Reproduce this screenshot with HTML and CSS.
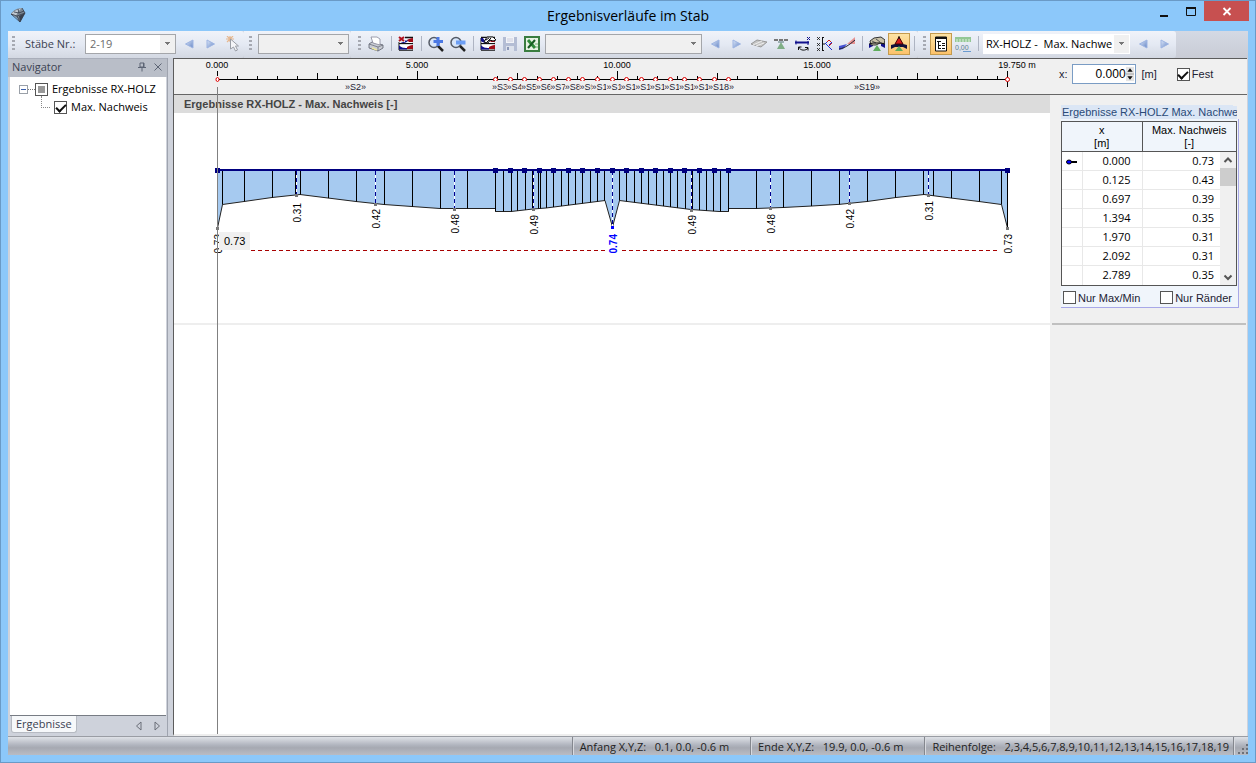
FILE: index.html
```html
<!DOCTYPE html>
<html lang="de">
<head>
<meta charset="utf-8">
<title>Ergebnisverläufe im Stab</title>
<link rel="stylesheet" href="styles.css">
</head>
<body>
<svg class="defs" aria-hidden="true">
  <defs>
    <linearGradient id="tri" x1="0" y1="0" x2="1" y2="1"><stop offset="0" stop-color="#dfeafa"/><stop offset="1" stop-color="#6484c4"/></linearGradient>
    <symbol id="i-prev" viewBox="0 0 16 16"><path d="M12 4v8L4.500 8z" fill="url(#tri)" stroke="#9db4e2"/></symbol>
    <symbol id="i-next" viewBox="0 0 16 16"><path d="M4 4v8l7.500-4z" fill="url(#tri)" stroke="#9db4e2"/></symbol>
    <symbol id="i-flag" viewBox="0 0 16 16">
      <path d="M1 1.500h14M1 7.500h14M1 14h14" stroke="#111" stroke-width="1.500"/>
      <path d="M1 2v12" stroke="#111"/>
      <path d="M1.500 2h4c2 3 5 1 9 0v5h-13z" fill="#fff"/>
      <path d="M1 2h2c1 3 5 3 7 2v1c-3 3-7 2-9 0z" fill="#10108c"/><path d="M9 4c2-1 3-2 6-2v4h-4z" fill="#a00c18"/>
      <path d="M1.500 8.500h13v5h-13z" fill="#fff"/>
      <path d="M1 9c2 3 6 3 8 3v1.500H1z" fill="#10108c"/><path d="M9 11c2-1 3-2 6-2v4H9z" fill="#a00c18"/>
    </symbol>
    <symbol id="i-support" viewBox="0 0 16 16"><path d="M1 4h14" stroke="#777" stroke-width="2" stroke-dasharray="4 1"/><path d="M8 6l4 7H4z" fill="#7fae86"/><path d="M5 6h6" stroke="#577" /></symbol>
  </defs>
</svg>

<header class="titlebar">
  <svg class="app-icon" viewBox="0 0 16 16"><path d="M1 7C3 3 8 1 12 1l3 5-5 9-3-4z" fill="#7c8894"/><path d="M1 7C4 4 8 2 12 1c-3 2-5 5-6 8z" fill="#c0c8d0"/><path d="M9 9l6-3-5 9z" fill="#38404e"/><path d="M1 7l6 2 8-3M7 9l3 6 5-9-3-5M1 7l9 8M4 5l5 1 5-2M8 2l1 4" stroke="#333a48" stroke-width=".8" fill="none"/></svg>
  <h1>Ergebnisverläufe im Stab</h1>
  <div class="window-buttons">
    <button class="win" aria-label="Minimieren"><svg viewBox="0 0 12 12"><path d="M2 11h8" stroke="#111" stroke-width="2"/></svg></button>
    <button class="win" aria-label="Maximieren"><svg viewBox="0 0 12 12"><path d="M1.500 3v7.500h9V3" fill="none" stroke="#111"/><path d="M1 3h10" stroke="#111" stroke-width="2"/></svg></button>
    <button class="win close" aria-label="Schließen"><svg viewBox="0 0 12 12"><path d="M2.500 3l7 7M9.500 3l-7 7" stroke="#fff" stroke-width="1.800"/></svg></button>
  </div>
</header>

<div class="frame">
  <div class="toolbar" role="toolbar">
    <div class="group">
      <span class="grip"></span>
      <label for="bars">Stäbe Nr.:</label>
      <select id="bars" class="combo w-bars"><option>2-19</option></select>
      <button class="tool" aria-label="Vorheriger Stab"><svg><use href="#i-prev"/></svg></button>
      <button class="tool" aria-label="Nächster Stab"><svg><use href="#i-next"/></svg></button>
      <button class="tool" aria-label="Stab wählen"><svg viewBox="0 0 16 16"><path d="M1 3h8M5 0v6M2 0l6 6M8 0L2 6" stroke="#e6b890" stroke-width="1.200"/><path d="M5.500 3v10l3-2 2 4 2-1-2-4h3z" fill="#f4f5f8" stroke="#9a9ea6"/></svg></button>
    </div>
    <div class="group">
      <span class="grip"></span>
      <select class="combo w-bars empty" aria-label="Lastfall"><option></option></select>
    </div>
    <div class="group">
      <span class="grip"></span>
      <button class="tool" aria-label="Drucken"><svg viewBox="0 0 16 16"><path d="M1 8l3-2 11 3v3l-5 3-9-3z" fill="#c9ccd4" stroke="#5c606c" stroke-width=".8"/><path d="M3 1l6 0 3 2 0 6-7-2z" fill="#fff" stroke="#889" stroke-width=".8"/><path d="M1 8l9 3 5-2M10 11v4" stroke="#6c707c" stroke-width=".8" fill="none"/><path d="M4 12l5 2" stroke="#eee8a0" stroke-width="1.500"/></svg></button>
      <span class="sep"></span>
      <button class="tool" aria-label="Verläufe löschen"><svg viewBox="0 0 16 16"><use href="#i-flag"/><path d="M0 0h7v6H0z" fill="#e8edf6"/><path d="M1 1l5 4M6 1L1 5" stroke="#b0101c" stroke-width="2"/></svg></button>
      <span class="sep"></span>
      <button class="tool" aria-label="Vergrößern"><svg viewBox="0 0 16 16"><circle cx="6" cy="6.500" r="5" fill="#d8e6fa" stroke="#555b66" stroke-width="1.500"/><path d="M10 10l5 5" stroke="#222" stroke-width="2.500"/><path d="M10 1v9M5.500 5.500H15" stroke="#4a78e4" stroke-width="3"/></svg></button>
      <button class="tool" aria-label="Verkleinern"><svg viewBox="0 0 16 16"><circle cx="6" cy="6.500" r="5" fill="#d8e6fa" stroke="#555b66" stroke-width="1.500"/><path d="M10 10l5 5" stroke="#222" stroke-width="2.500"/><path d="M6 6.500h9.500" stroke="#6c9ef4" stroke-width="4"/></svg></button>
      <span class="sep"></span>
      <button class="tool" aria-label="Verläufe"><svg viewBox="0 0 16 16"><use href="#i-flag"/><path d="M4 6l3-5h6l3 3-3 1-3-1-2 3z" fill="#fff" stroke="#111"/><path d="M6 4l3-2M7 6l4-4" stroke="#111"/></svg></button>
      <button class="tool" aria-label="Speichern"><svg viewBox="0 0 16 16"><path d="M1 1h14v14H1z" fill="#b4bdd4"/><path d="M4 1h8v6H4z" fill="#f2f4f8"/><path d="M5 3h6M5 5h6" stroke="#ccd"/><path d="M4 10h8v5H4z" fill="#dde2ec"/><path d="M5 11h2v3H5z" fill="#8c98b8"/></svg></button>
      <button class="tool" aria-label="Excel-Export"><svg viewBox="0 0 16 16"><path d="M1 1h14v14H1z" fill="#e8f3e4" stroke="#3a7d40" stroke-width="2"/><path d="M4 4l7 8" stroke="#2f8a3a" stroke-width="3"/><path d="M11 4l-7 8" stroke="#175c22" stroke-width="2"/><path d="M11 8h3M11 11h3" stroke="#7ab47c"/></svg></button>
      <select class="combo w-wide empty" aria-label="Verlauf"><option></option></select>
      <button class="tool" aria-label="Zurück"><svg><use href="#i-prev"/></svg></button>
      <button class="tool" aria-label="Weiter"><svg><use href="#i-next"/></svg></button>
      <button class="tool" aria-label="Fläche"><svg viewBox="0 0 16 16"><path d="M0 8l6-4 10 2-6 5z" fill="#c4c4c4" stroke="#999"/><path d="M2 9l9-4M5 10l8-3" stroke="#eee"/></svg></button>
      <button class="tool" aria-label="Lager"><svg><use href="#i-support"/></svg></button>
      <button class="tool" aria-label="Achse drehen"><svg viewBox="0 0 16 16"><path d="M0 6.500h14" stroke="#10108c" stroke-width="2"/><path d="M1 4.500v4M13 5v4" stroke="#10108c"/><path d="M12 1l3 3M15 1l-3 3" stroke="#10108c"/><path d="M4 11c1 4 7 4 9 1M3.500 14v-3h3M13 14.500v-3h-3" stroke="#111" fill="none"/></svg></button>
      <button class="tool" aria-label="Knoten"><svg viewBox="0 0 16 16"><path d="M0 1l3 3M3 1L0 4M0 7l3 3M3 7l-3 3M0 12l3 3M3 12l-3 3" stroke="#111" stroke-width=".8"/><path d="M5.500 1v14M5 1.500h2M5 8h3M5 14.500h2" stroke="#111"/><path d="M8 8l4-4 3 3-3 3" stroke="#d02020" fill="none"/><path d="M8 8l2-2M9 8l6 6M12 9l3-3" stroke="#2030d0" fill="none"/></svg></button>
      <button class="tool" aria-label="Glätten"><svg viewBox="0 0 16 16"><path d="M8 8l8-7v7z" fill="#e89494"/><path d="M0 10l8-2-4 5-4 1z" fill="#4450d4"/><path d="M0 13c6-1 10-4 16-9" stroke="#223" fill="none"/></svg></button>
      <span class="sep"></span>
      <button class="tool" aria-label="Durchlauf"><svg viewBox="0 0 16 16"><path d="M0 12V8h4v2zM16 12V8h-4v2z" fill="#10108c"/><path d="M1 5l4-3 7-1 4 3-1 4-4-1-4 2-5 0z" fill="#c9c2a8" stroke="#333"/><path d="M3 5l4 2M7 3l4 3" stroke="#555"/><path d="M0 8l4-1h8l4 1" stroke="#111" fill="none"/><path d="M8 9l4 6H4z" fill="#5fae5c"/></svg></button>
      <button class="tool active" aria-label="Extremwerte"><svg viewBox="0 0 16 16"><path d="M0 13V9l4-1h8l4 1v4l-4-2H4z" fill="#10103c"/><path d="M8 1l4 7H4z" fill="#d81c1c" stroke="#400"/><path d="M8 0v3" stroke="#111"/><path d="M8 10l4 5H4z" fill="#5fae5c"/></svg></button>
      <span class="sep"></span>
    </div>
    <div class="group">
      <span class="grip"></span>
      <button class="tool active" aria-label="Navigator"><svg viewBox="0 0 16 16"><path d="M2.500 1h11v14h-11z" fill="#fff" stroke="#111"/><path d="M2 2h12" stroke="#111" stroke-width="2"/><path d="M5.500 5v8M4 5.500h4M5 9.500h3M5 12.500h3M9 7.500h3M9 9.500h3M9 12.500h3" stroke="#111"/></svg></button>
      <button class="tool" aria-label="Zahlenwerte"><svg viewBox="0 0 16 16"><path d="M0 1h16v5H0z" fill="#93c795"/><path d="M2 3v3M5 3v3M8 3v3M11 3v3M14 3v3" stroke="#dff0df"/><text x="0" y="14" class="icon-text">0,00</text><path d="M8 15.500h8" stroke="#6a9bd0"/></svg></button>
      <span class="sep"></span>
      <select class="combo w-result" aria-label="Ergebnis"><option>RX-HOLZ -&nbsp; Max. Nachwe</option></select>
      <button class="tool" aria-label="Vorheriges Ergebnis"><svg><use href="#i-prev"/></svg></button>
      <button class="tool" aria-label="Nächstes Ergebnis"><svg><use href="#i-next"/></svg></button>
    </div>
  </div>

  <main class="workspace">
    <aside class="navigator">
      <div class="nav-head">
        <h2>Navigator</h2>
        <button class="mini" aria-label="Anheften"><svg viewBox="0 0 10 10"><path d="M3 1h4v4H3zM1 5.500h8M5 6v3.500M6.500 1v4" fill="none" stroke="#5c6474"/></svg></button>
        <button class="mini" aria-label="Navigator schließen"><svg viewBox="0 0 10 10"><path d="M1.500 1.500l7 7M8.500 1.500l-7 7" stroke="#5c6474"/></svg></button>
      </div>
      <div class="tree">
        <div class="node">
          <button class="expander" aria-label="Zuklappen"></button><span class="dots"></span>
          <input type="checkbox" id="n1" class="check partial"><label for="n1">Ergebnisse RX-HOLZ</label>
        </div>
        <div class="node child">
          <span class="elbow"></span>
          <input type="checkbox" id="n2" class="check" checked><label for="n2">Max. Nachweis</label>
        </div>
      </div>
      <div class="nav-tabs">
        <button class="tab">Ergebnisse</button>
        <button class="mini" aria-label="Tab zurück"><svg viewBox="0 0 10 10"><path d="M7 1v8L2.500 5z" fill="none" stroke="#6a6e78"/></svg></button>
        <button class="mini" aria-label="Tab weiter"><svg viewBox="0 0 10 10"><path d="M3 1v8L7.500 5z" fill="none" stroke="#6a6e78"/></svg></button>
      </div>
    </aside>

    <section class="content">
      <div class="plot">
        <svg id="ruler" class="ruler" viewBox="174 59 876 35"></svg>
        <h2 class="plot-title">Ergebnisse RX-HOLZ - Max. Nachweis [-]</h2>
        <svg id="chart" class="chart" viewBox="174 113 876 210"></svg>
        <span class="cursor"></span>
        <output class="tip">0.73</output>
      </div>
      <aside class="side">
        <div class="position">
          <label for="xpos">x:</label>
          <span class="spin">
            <input id="xpos" type="text" value="0.000">
            <svg viewBox="0 0 9 16"><path d="M0 0h9v16H0z" fill="#e4e4e4"/><path d="M0 8h9" stroke="#999"/><path d="M1.500 5.500h6l-3-4zM1.500 10.500h6l-3 4z" fill="#111"/></svg>
          </span>
          <span>[m]</span>
          <input type="checkbox" id="fest" class="check" checked><label for="fest">Fest</label>
        </div>
        <div class="results">
          <h2>Ergebnisse RX-HOLZ Max. Nachwe</h2>
          <div class="results-body">
            <div class="table-box">
              <table>
                <colgroup><col class="c-mark"><col class="c-x"><col></colgroup>
                <thead><tr><th colspan="2">x<br>[m]</th><th>Max. Nachweis<br>[-]</th></tr></thead>
                <tbody>
                  <tr><td><svg class="marker" viewBox="0 0 11 6"><path d="M3 3h8" stroke="#000" stroke-width="2"/><ellipse cx="3" cy="3" rx="2.500" ry="2" fill="#00f" stroke="#000"/></svg></td><td>0.000</td><td>0.73</td></tr>
                  <tr><td></td><td>0.125</td><td>0.43</td></tr>
                  <tr><td></td><td>0.697</td><td>0.39</td></tr>
                  <tr><td></td><td>1.394</td><td>0.35</td></tr>
                  <tr><td></td><td>1.970</td><td>0.31</td></tr>
                  <tr><td></td><td>2.092</td><td>0.31</td></tr>
                  <tr><td></td><td>2.789</td><td>0.35</td></tr>
                </tbody>
              </table>
              <div class="scroll">
                <svg viewBox="0 0 16 16"><path d="M4.500 10L8 6.500l3.500 3.500" fill="none" stroke="#555" stroke-width="2"/></svg>
                <span class="thumb"></span>
                <svg viewBox="0 0 16 16"><path d="M4.500 6.500L8 10l3.500-3.500" fill="none" stroke="#555" stroke-width="2"/></svg>
              </div>
            </div>
            <div class="filters">
              <span><input type="checkbox" id="mm" class="check"><label for="mm">Nur Max/Min</label></span>
              <span><input type="checkbox" id="rd" class="check"><label for="rd">Nur Ränder</label></span>
            </div>
          </div>
        </div>
      </aside>
    </section>
  </main>

  <footer class="status">
    <span class="cell">Anfang X,Y,Z:&nbsp;&nbsp; 0.1, 0.0, -0.6 m</span>
    <span class="cell">Ende X,Y,Z:&nbsp;&nbsp; 19.9, 0.0, -0.6 m</span>
    <span class="cell">Reihenfolge:&nbsp;&nbsp; 2,3,4,5,6,7,8,9,10,11,12,13,14,15,16,17,18,19</span>
    <span class="cell"><svg class="size-grip" viewBox="0 0 10 10"><path d="M8 0h2v2H8zM4 4h2v2H4zM8 4h2v2H8zM0 8h2v2H0zM4 8h2v2H4zM8 8h2v2H8z" fill="#6d7078"/></svg></span>
  </footer>
</div>
<script src="chart.js"></script>
</body>
</html>
```
FILE: styles.css
```css
* { box-sizing: border-box; }
html, body { height: 100%; }
body {
  margin: 0;
  display: flex;
  flex-direction: column;
  background: #8cc8fa;
  border: 1px solid #6a9ac6;
  padding: 0 7px 7px;
  font: 12px/16px "Open Sans", "Noto Sans", sans-serif;
  color: #000;
  overflow: hidden;
}
button { border: 0; padding: 0; background: none; font: inherit; color: inherit; }
h1, h2 { margin: 0; font-weight: normal; }
.defs { position: absolute; width: 0; height: 0; }

.titlebar { display: grid; grid-template-columns: 1fr auto 1fr; height: 30px; }
.app-icon { width: 16px; height: 16px; margin: 6px 2px; }
.titlebar h1 { font-size: 14px; line-height: 30px; }
.window-buttons { display: flex; justify-content: flex-end; align-items: flex-start; margin-right: -1px; }
.win { width: 27px; height: 20px; display: grid; place-items: center; }
.win svg { width: 12px; height: 12px; }
.win.close { width: 45px; background: #c75050; }

.frame { flex: 1; min-height: 0; display: flex; flex-direction: column; background: #ced2db; }

.toolbar { display: flex; height: 27px; background: linear-gradient(#d4d9e4, #c9ccd5); flex: none; }
.group {
  display: flex;
  align-items: center;
  padding: 0 0 2px 4px;
  background: linear-gradient(#f0f3f9, #e4e9f3 50%, #d3d8e2);
  border-radius: 0 3px 3px 0;
}
.group + .group { padding-left: 5px; }
.grip { width: 3px; height: 15px; background: repeating-linear-gradient(#a6a9b2 0 2px, transparent 2px 4px); margin-right: 4px; }
.group:nth-child(3) .grip { margin-left: 2px; }
.group label { width: 64px; padding-left: 6px; color: #3b4252; font-size: 11px; white-space: nowrap; }
.sep { width: 8px; height: 15px; background: linear-gradient(#aeb4c2, #aeb4c2) center / 1px 100% no-repeat; }
.tool { width: 22px; height: 22px; display: grid; place-items: center; }
.tool svg { width: 16px; height: 16px; }
.tool.active { background: linear-gradient(#fde3a4, #fcc26a); border: 1px solid #c49b4e; }
.icon-text { font: 7px "Liberation Sans", sans-serif; fill: #5b7f8f; }
.combo {
  appearance: none;
  height: 20px;
  margin: 0 2px;
  padding: 0 18px 0 4px;
  border: 1px solid #a4a6aa;
  border-radius: 0;
  font: 11px/16px "Open Sans", "Noto Sans", sans-serif;
  color: #6c6c6c;
  background:
    linear-gradient(#777, #777) right 5px top 7px / 5px 1px no-repeat,
    linear-gradient(#777, #777) right 6px top 8px / 3px 1px no-repeat,
    linear-gradient(#777, #777) right 7px top 9px / 1px 1px no-repeat,
    linear-gradient(#f0f0f0, #f0f0f0) right / 15px 100% no-repeat,
    #fff;
}
.combo.empty { background-color: #f0f0f0; }
.w-bars { width: 91px; }
.w-wide { width: 157px; }
.w-result { width: 147px; margin-left: 1px; border-color: #fff; color: #000; padding: 0 15px 0 2px; }

.workspace { flex: 1; min-height: 0; display: flex; gap: 5px; }
.navigator { width: 160px; flex: none; display: flex; flex-direction: column; background: #ced2db; border-right: 1px solid #9fa4af; }
.nav-head { display: flex; align-items: center; gap: 6px; height: 19px; padding: 0 4px 2px; background: #b9bec8; border-top: 1px solid #a9aeba; }
.nav-head h2 { flex: 1; font-size: 11px; color: #3b4252; }
.mini { width: 10px; height: 10px; display: grid; }
.mini svg { width: 10px; height: 10px; }
.tree { flex: 1; margin: 0 1px 0 2px; padding-top: 3px; background: #fff; border-bottom: 1px solid #777c84; font-size: 11px; }
.node { display: flex; align-items: center; height: 18px; padding-left: 9px; white-space: nowrap; }
.expander { width: 9px; height: 9px; border: 1px solid #9aa0a8; background: linear-gradient(#3a5fae, #3a5fae) center / 5px 1px no-repeat #fff; }
.dots { width: 7px; border-top: 1px dotted #777; }
.check {
  appearance: none;
  width: 13px;
  height: 13px;
  margin: 0 4px 0 0;
  border: 1px solid #555;
  background: #fff;
  flex: none;
}
.check:checked { display: grid; place-items: center; }
.check:checked::after { content: ""; width: 4px; height: 8px; margin-bottom: 2px; border: solid #111; border-width: 0 2px 2px 0; transform: rotate(45deg); }
.partial { background: linear-gradient(#999, #999) center / 7px 7px no-repeat #fff; }
.node.child { padding-left: 31px; }
.elbow { width: 9px; height: 12px; margin: -10px 4px 0 0; border: dotted #888; border-width: 0 0 1px 1px; }
.nav-tabs { display: flex; align-items: center; gap: 8px; height: 20px; padding: 0 5px 0 3px; }
.tab { height: 17px; margin: -3px auto 0 0; padding: 0 4px; background: #f6f8fa; border: 1px solid #b6bac2; border-top: 0; border-radius: 0 0 3px 3px; font-size: 11px; line-height: 16px; color: #3b4252; }

.content { flex: 1; min-width: 0; display: flex; background: #fff; border-left: 1px solid #5c5c5c; border-top: 1px solid #5c5c5c; border-bottom: 2px solid #eee; margin-right: 1px; }
.plot { flex: 1; min-width: 0; position: relative; display: flex; flex-direction: column; align-items: flex-start; background: linear-gradient(#f0f0f0, #f0f0f0) 0 0 / 100% 35px no-repeat; }
.ruler { width: 876px; height: 35px; }
.plot-title { align-self: stretch; height: 19px; border-top: 1px solid #666; background: #dcdcdc; padding-left: 10px; font: bold 11px/18px "Liberation Sans", sans-serif; color: #444; }
.chart { width: 876px; height: 210px; }
.chart + .cursor::before { content: ""; }
.plot::after { content: ""; align-self: stretch; height: 2px; background: #eee; }
.cursor { position: absolute; left: 43px; top: 28px; bottom: 0; width: 1px; background: #808080; }
.tip { position: absolute; left: 45px; top: 173px; padding: 0 5px; background: #f0f0f0; font: 11px/18px "Liberation Sans", sans-serif; }
#ruler text { font: 9px "Liberation Sans", sans-serif; text-anchor: middle; }
#ruler .seg { fill: #223; }
#chart text { font: 10px "Liberation Sans", sans-serif; text-anchor: end; }
#chart .peak { font-weight: bold; fill: #00f; }

.side { width: 197px; flex: none; background: #f0f0f0; font: 11px/16px "Liberation Sans", sans-serif; color: #223; }
.position { display: flex; align-items: center; height: 36px; padding: 0 0 5px 9px; border-bottom: 1px solid #666; }
.spin { display: flex; width: 64px; height: 20px; margin: 0 6px 0 4px; padding: 1px; border: 1px solid #7a9cc4; background: #fff; }
.spin input { width: 52px; border: 0; padding: 0; text-align: right; font: 12px/16px "Liberation Sans", sans-serif; background: none; }
.spin svg { width: 9px; height: 16px; }
.position .check { margin: 0 2px 0 20px; }
.results { margin: 10px 8px 0 11px; }
.results h2 { height: 14px; padding-left: 1px; background: linear-gradient(to top right, #dbe6f5 97%, #f0f0f0 97%); font: 11px/14px "Liberation Sans", sans-serif; color: #2a4a78; white-space: nowrap; overflow: hidden; margin-right: 2px; }
.results-body { padding: 2px 1px 1px 0; background: #f0f5fb; border-right: 1px solid #a8a8e8; border-bottom: 1px solid #a8a8e8; }
.table-box { position: relative; border: 1px solid #555; }
table { width: 100%; table-layout: fixed; border-collapse: collapse; background: #fff; color: #000; }
.c-mark { width: 20px; }
.c-x { width: 60px; }
th { height: 29px; padding: 2px 0 1px; background: #f0f5fb; font: 11px/13px "Liberation Sans", sans-serif; border-bottom: 1px solid #555; }
th + th { border-left: 1px solid #555; }
td { height: 19px; padding: 0 11px 0 0; text-align: right; font: 11px/18px "Open Sans", "Noto Sans", sans-serif; border: solid #e8e8e8; border-width: 0 0 1px 1px; }
td:first-child { padding: 0; border-left: 0; text-align: center; }
td:last-child { padding-right: 22px; }
tr:last-child td { border-bottom: 0; }
.marker { width: 11px; height: 6px; }
.scroll { position: absolute; right: 0; top: 30px; bottom: 0; width: 16px; display: flex; flex-direction: column; background: #f0f0f0; }
.scroll svg { width: 16px; height: 16px; flex: none; }
.thumb { height: 18px; background: #cdcdcd; margin-bottom: auto; }
.filters { display: flex; justify-content: space-between; padding: 4px 5px 0 2px; }
.filters span { display: flex; align-items: center; }
.filters .check { margin-right: 2px; }
.results::after { content: ""; display: block; height: 2px; margin: 15px -7px 0 -9px; background: #c0c0c0; }

.status { display: flex; justify-content: flex-end; height: 19px; flex: none; border-top: 1px solid #9a9da4; background: linear-gradient(#dfe2e7, #b0b4be 45%, #a6a9b2 60%, #b9bcc4); font-size: 11px; line-height: 20px; color: #222; }
.cell { padding: 0 21px 0 7px; border-left: 1px solid #84878e; box-shadow: inset 1px 0 #d8dae0; white-space: nowrap; }
.cell:nth-child(3) { padding-right: 4px; }
.cell:last-child { padding: 0 0 0 4px; }
.size-grip { width: 10px; height: 10px; margin-top: 7px; }
```
FILE: chart.js
```js
const NS = "http://www.w3.org/2000/svg";
const ruler = document.getElementById("ruler");
const chart = document.getElementById("chart");

function add(parent, tag, attrs, text) {
  const el = document.createElementNS(NS, tag);
  for (const k in attrs) el.setAttribute(k, attrs[k]);
  if (text) el.textContent = text;
  parent.append(el);
}
function line(parent, x1, y1, x2, y2, stroke, extra) {
  add(parent, "path", { d: `M${x1} ${y1}L${x2} ${y2}`, stroke, fill: "none", ...extra });
}

const X0 = 217.5, X1 = 1007.5;
const nodes = Array.from({ length: 17 }, (_, i) => Math.round(495 + i * 14.57) + 0.5);

// Ruler: scale, member nodes and member labels
for (let i = 1; i < 40; i++) {
  const x = X0 + i * 20;
  if (x < X1) line(ruler, x, i % 10 === 0 ? 71 : i % 5 === 0 ? 73 : 76, x, 79, "#000");
}
[["0.000", 217], ["5.000", 417], ["10.000", 617], ["15.000", 817], ["19.750 m", 1017]]
  .forEach(([t, x]) => add(ruler, "text", { x, y: 68 }, t));
line(ruler, X0, 79.5, X1, 79.5, "#000");
line(ruler, X1, 71, X1, 87, "#000");
line(ruler, X0, 71, X0, 76, "#000");
line(ruler, X0, 87, X0, 94, "#000");
[X0, ...nodes, X1].forEach(x =>
  add(ruler, "ellipse", { cx: x, cy: 79.5, rx: x === X0 ? 1.5 : 2, ry: 2, fill: "#fff", stroke: "#e00000" }));
function segment(n, x) {
  const w = n > 9 ? 26 : 21;
  add(ruler, "rect", { x: x - w / 2, y: 81, width: w, height: 11, fill: "#f0f0f0" });
  add(ruler, "text", { x, y: 90, class: "seg" }, `»S${n}»`);
}
segment(2, 355.5);
for (let n = 3; n <= 18; n++) segment(n, 502.5 + (n - 3) * 14.57);
segment(19, 867);

// Result diagram
const curve = [[217.5, 228], [222.5, 204.5], [244, 201.5], [272, 197.5], [300, 194.5], [328, 198], [356, 201.5],
  [384, 204.5], [412, 206.5], [440, 208.5], [495.5, 208.5], [495.5, 211.5], [511, 211.5], [533, 209], [546, 208],
  [605, 200.5], [612.5, 227], [619.5, 200.5], [691, 209.5], [719, 211.5], [728.5, 211.5], [728.5, 208.5],
  [756, 208.5], [783, 207.5], [812, 206], [840, 204.3], [867, 201.5], [896, 197.5], [924, 194.5], [951, 198],
  [979, 201.5], [1001.5, 204.5], [1007.5, 228]];
const d = "M" + curve.map(p => p.join(" ")).join("L");
add(chart, "path", { d: `${d}V170H217.5Z`, fill: "#a6caf0" });
add(chart, "path", { d, fill: "none", stroke: "#222" });

function depth(x) {
  for (let i = 1; i < curve.length; i++) {
    const [a, ya] = curve[i - 1], [b, yb] = curve[i];
    if (x <= b && b > a) return ya + (yb - ya) * (x - a) / (b - a);
  }
  return 228;
}
[222, 244, 272, 295, 300, 328, 356, 384, 412, 440, 467, 495, 503, 511, 517, 525, 532, 538, 540, 546, 553, 561,
  568, 575, 582, 590, 597, 604, 619, 626, 634, 641, 648, 656, 663, 670, 677, 685, 692, 699, 706, 713, 720, 728,
  756, 783, 811, 839, 867, 895, 923, 933, 951, 979, 1001, 1007]
  .forEach(x => line(chart, x + 0.5, 171, x + 0.5, x === 495 || x === 728 ? 211.5 : depth(x + 0.5), "#000"));

[[251, 606], [622, 999]].forEach(([a, b]) => line(chart, a, 250.5, b, 250.5, "#a80000", { "stroke-dasharray": "4 3" }));

[[296.5, "0.31", 203], [375.5, "0.42", 209], [454.5, "0.48", 214], [533.5, "0.49", 215], [612.5, "0.74", 234],
  [691.5, "0.49", 215], [770.5, "0.48", 214], [849.5, "0.42", 209], [928.5, "0.31", 201],
  [217.5, "0.73", 234], [1007.5, "0.73", 234]].forEach(([x, t, y]) => {
  const end = depth(x), peak = t === "0.74";
  if (x > X0 && x < X1) {
    line(chart, x, 171, x, end, "#fff");
    line(chart, x, 171, x, end, "#000090", { "stroke-dasharray": "4 3" });
  }
  add(chart, "rect", { x: x - 1.5, y: Math.round(end) - 1, width: 3, height: 3, fill: peak ? "#00f" : "#777" });
  const attrs = { transform: `translate(${x + 4} ${y}) rotate(-90)` };
  if (peak) attrs.class = "peak";
  add(chart, "text", attrs, t);
});

line(chart, X0, 170, X1, 170, "#000080", { "stroke-width": 2 });
[X0, ...nodes, X1].forEach(x => add(chart, "rect", { x: x - 2.5, y: 168, width: 5, height: 5, fill: "#000080" }));
```
